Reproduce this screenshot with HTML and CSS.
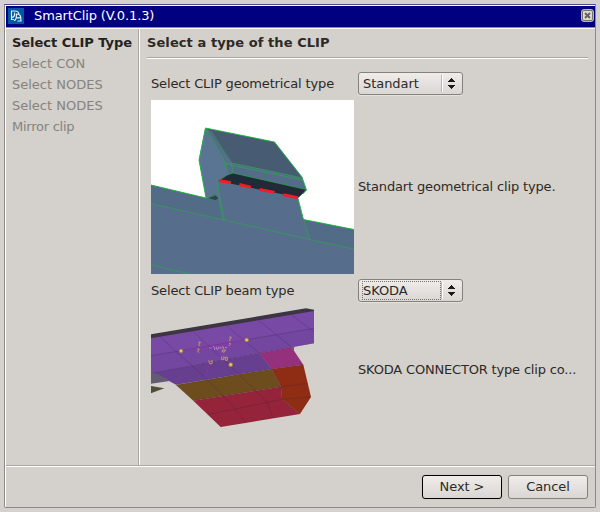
FILE: index.html
```html
<!DOCTYPE html>
<html lang="en"><head><meta charset="utf-8"><title>SmartClip</title><link rel="stylesheet" href="styles.css"></head>
<body>
<div class="window">
  <header class="titlebar">
    <svg class="logo" width="16" height="16" viewBox="0 0 16 16"><rect width="16" height="16" fill="#0058a4"/><path d="M6 11.500H3.500V3H7c2.500 0 4 1.500 4 4M3.500 9.500c2.500 0 3.500-2 3-5M6 12.500c2 0 2.500-3 2.500-6.500 3.500 0 4.500 1.500 4.500 7H9.500M8.500 9.800h4.500" fill="none" stroke="#e5eef6" stroke-width="1.200"/></svg>
    <span class="title">SmartClip (V.0.1.3)</span>
    <svg class="close" width="13" height="13" viewBox="0 0 13 13"><rect x=".5" y=".5" width="12" height="12" rx="2.500" fill="#d4d0cb" stroke="#b7b4ac"/><rect x="1.500" y="1.500" width="10" height="10" rx="1.500" fill="#dedbd6" stroke="#77736b"/><path d="M4 4l5 5M9 4l-5 5" stroke="#65615a" stroke-width="1.900"/></svg>
  </header>
  <div class="body">
    <nav class="steps"><div class="step current">Select CLIP Type</div><div class="step">Select CON</div><div class="step">Select NODES</div><div class="step">Select NODES</div><div class="step last">Mirror clip</div></nav>
    <main class="page">
      <h1 class="heading">Select a type of the CLIP</h1>
      <div class="form">
        <div class="label">Select CLIP geometrical type</div>
        <div class="combo"><span class="value">Standart</span><svg class="arrows" width="9" height="11" viewBox="0 0 9 11" shape-rendering="crispEdges"><path d="M4 0h1v1h1v1h1v1h1v1H1V3h1V2h1V1h1zM1 7h7v1H7v1H6v1H5v1H4v-1H3V9H2V8H1z" fill="#1e1b18"/></svg></div>
        <svg class="picture" width="203" height="174" viewBox="151 100 203 174">
          <path fill="#fff" d="M151 100h203v174H151z"/>
          <path fill="#566e8c" d="M151 185L206 198 199 160 205.500 128 274.500 142 302 177 306.500 190 298 198 303.500 219.500 354 229.500V274H151z"/>
          <path fill="#526b86" d="M151 185l55 13 12 1 5.500 21L151 203.500zM303 219.500l51 10V249l-44-9z"/>
          <path fill="#5a7593" d="M205 128.500l20.500 35.500 2 10-9.500 7 2 19-14-2-7-38z"/>
          <path fill="#475b73" d="M206 128.500L274.500 142 302 178 231 162.500 210 131z"/>
          <path fill="#536d89" d="M226 164l6-1 70 15 4.500 12L233 173l-6 2z"/>
          <path fill="#202b37" d="M218 181l10-6.500 5-1.500 73.500 16.500-8 8z"/>
          <path fill="#2d4547" d="M208 198l7-3.500 3.500 4-3 1.500z"/>
          <g fill="none" stroke="#30a253" stroke-width=".9"><path d="M151 185L206 198 199 160 205.500 128 274.500 142 302 177 306.500 190 303 194M298 198.500l5.500 21L354 229.500" stroke="#21b83f"/><path d="M206 129l20 35 2 11M211 131l20.500 32 1.500 10M226 164l5.500-1L303 178M225.500 164L302.500 180M228 174.500l5-1.500 73 16.500M218 181l10-6.500M218 181l2 24 3 15M219 193l5.500 27M206 198l10-3M151 203.500l73 16.500 86 19.500 44 9.500M303.500 219l6.500 21M151 265l39 9" opacity=".8"/></g>
          <path d="M219 180.600l12 2.200M239.300 184.500l11.500 2.800M259.500 189.500l15 2.900M283.300 194.700l14.500 2.900" fill="none" stroke="#f41c22" stroke-width="3"/>
        </svg>
        <div class="label">Standart geometrical clip type.</div>
        <div class="label">Select CLIP beam type</div>
        <div class="combo focused"><span class="value">SKODA</span><svg class="arrows" width="9" height="11" viewBox="0 0 9 11" shape-rendering="crispEdges"><path d="M4 0h1v1h1v1h1v1h1v1H1V3h1V2h1V1h1zM1 7h7v1H7v1H6v1H5v1H4v-1H3V9H2V8H1z" fill="#1e1b18"/></svg></div>
        <svg class="picture" width="163" height="122" viewBox="18 21 489 366">
          <path fill="#3c3643" d="M18 103L483 25l24 4v14L18 120z"/>
          <path fill="#784aa5" d="M18 115L507 33v97l-67 12-97 18-313 60-12-1z"/>
          <path fill="#6f459b" d="M18 167L507 85v45l-67 12-97 18-313 60-12-1z" opacity=".6"/>
          <path fill="#673f91" d="M28 219l315-59 37 47L93 254z"/>
          <path fill="#625b71" d="M18 219l13-1 43 25-56 8zM440 142l8-2-2 13z"/>
          <path fill="#514c39" d="M18 258l40 7-40 15z"/>
          <path fill="#95317c" d="M343 160l97-18 35 52-95 13z"/>
          <path fill="#6d4c1e" d="M93 255l287-48 28 53-263 42z"/>
          <path fill="#95243a" d="M145 302l263-42 3 38 54 44-238 39z"/>
          <path fill="#8e2d13" d="M380 207l95-13 23 97-33 51-54-44-3-38z"/>
          <g fill="none" stroke="#341942" stroke-width="2" opacity=".35"><path d="M18 167L507 85M28 219l315-59 97-18M45 111l140 125 88 92 30 42M145 95l135 126 85 84 20 49M245 77l98 83 37 47 28 53 3 38 54 44M342 61l98 81M440 45l67 50M93 255l287-48 95-13M145 302l263-42 80-10M188 344l223-46 87-7"/></g>
          <g fill="none" stroke="#a230ad" stroke-width="2"><path d="M108 153l197-33M160 132l150-12M160 151l95-18M195 184l-15 52M208 135l50 60M208 140l80 5" opacity=".75"/></g>
          <g fill="none" stroke="#bd9a6b" stroke-width="3"><path d="M160 127q7-3 6 2l-5 4 4 5M157 147q8-2 5 3l-4 4 5 4M253 111q8-2 5 4l-5 3 2 5M252 130q5-3 4 3l-5 5M232 150h10l-4 6h-6zM191 181l3 10h7l1-9-6 2M230 169v10h6l1-10M240 172h7v9h-6z"/></g>
          <path fill="none" stroke="#bb8ccf" stroke-width="2.500" d="M193 144h7M204 138l5 5v7M214 140v7h7v-7M224 142h4v5M231 141h5v6M240 143h7"/>
          <g fill="#e5cd55" stroke="#a08248" stroke-width="2.500"><circle cx="108" cy="153" r="5.500"/><circle cx="305" cy="120" r="5.500"/><circle cx="257" cy="194" r="5.500"/></g>
        </svg>
        <div class="label beam-note">SKODA CONNECTOR type clip co...</div>
      </div>
    </main>
  </div>
  <footer class="actions"><button class="button primary">Next &gt;</button><button class="button">Cancel</button></footer>
</div>
</body></html>
```
FILE: styles.css
```css
* { box-sizing: border-box; }
body { margin: 0; height: 512px; overflow: hidden; padding: 4px; background: #d5d1cf; color: #2d2a26; font: 13px/21px "DejaVu Sans", sans-serif; }
.window { width: 592px; height: 504px; display: flex; flex-direction: column; background: #d4d0cb; border: 1px solid #8d8a86; border-top-color: #4b4b91; border-radius: 0 0 2px 2px; box-shadow: inset 1px 1px #fff; }
.titlebar { height: 23px; flex: none; margin: 1px 0 0 1px; padding: 0 1px 0 2px; display: flex; align-items: center; background: #000080; border-bottom: 1px solid #fff; box-shadow: inset 0 -1px #8d8a86; color: #fff; }
.logo { margin-top: -2px; }
.title { margin: -3px auto 0 10px; letter-spacing: -.12px; }
.close { margin-top: -3px; }
.body { display: flex; height: 438px; flex: none; margin-left: 1px; border-bottom: 1px solid #fff; box-shadow: inset 0 -1px #aaa69f; }
.steps { width: 134px; height: 436px; padding: 3px 0 0 6px; border-right: 1px solid #fff; box-shadow: inset -1px 0 #aaa69f; color: #86837e; white-space: nowrap; }
.step { height: 21px; }
.last { letter-spacing: -.25px; }
.current { color: #25221e; font-weight: bold; letter-spacing: -.03px; }
.page { width: 448px; padding: 3px 0 0 7px; }
.heading { margin: 0; height: 27px; font-size: 13px; line-height: 21px; letter-spacing: .08px; border-bottom: 1px solid #fff; box-shadow: inset 0 -1px #aaa69f; }
.form { display: grid; grid-template-columns: 203px 1fr; grid-template-rows: 23px 174px 23px 122px; gap: 5px 4px; margin: 13px 0 0 4px; align-items: center; }
.label { margin-top: -1px; white-space: nowrap; letter-spacing: -.15px; }
.beam-note { margin-top: 3px; letter-spacing: -.18px; }
.combo { width: 105px; height: 23px; display: flex; align-items: center; padding: 0 6px 0 3px; border: 1px solid #85817b; border-radius: 3px; background: linear-gradient(#fff, #fff) 83px 2px / 1px 17px no-repeat, linear-gradient(#bbb7b2, #bbb7b2) 82px 2px / 1px 17px no-repeat, linear-gradient(#efecea, #dad6d3); box-shadow: 0 1px #e6e3df; }
.value { width: 79px; height: 19px; line-height: 19px; padding-left: 1px; letter-spacing: -.06px; }
.focused .value { border: 1px dotted #77736d; padding-left: 0; line-height: 17px; }
.arrows { margin: 0 0 0 auto; }
.picture { display: block; }
.actions { flex: 1; margin-left: 1px; padding: 8px 7px 0 0; display: flex; gap: 6px; justify-content: flex-end; }
.button { height: 24px; width: 80px; padding: 0 0 2px; border: 1px solid #85817b; border-radius: 3px; background: linear-gradient(#efecea, #dad6d3); box-shadow: 0 0 0 1px #d0cdc5; color: #2d2a26; font: 13px "DejaVu Sans", sans-serif; letter-spacing: -.08px; }
.primary { border-color: #000; }
```
